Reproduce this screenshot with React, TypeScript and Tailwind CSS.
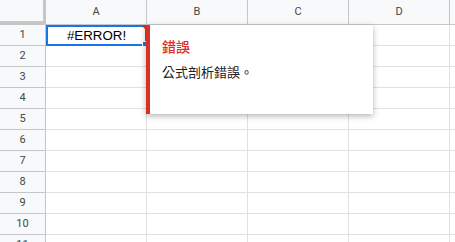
import React from "react";

const cols = ["A", "B", "C", "D", ""];
const rows = [1, 2, 3, 4, 5, 6, 7, 8, 9, 10, 11];

export default function App() {
  return (
    <div className="relative w-[455px] h-[242px] overflow-hidden bg-white" style={{ fontFamily: "Roboto, 'Liberation Sans', sans-serif" }}>
      {/* header row */}
      <div className="flex h-[25px]">
        <div className="w-[46px] shrink-0 h-[25px] bg-[#f8f9fa] border-r-[3px] border-b-[4px] border-[#c4c7c5]" />
        {cols.map((c, i) => (
          <div
            key={i}
            className="w-[101px] shrink-0 h-[25px] bg-[#f8f9fa] border-r border-b border-r-[#c4c7c5] border-b-[#c4c7c5] flex items-center justify-center text-[11px] text-[#444746]"
          >
            {c}
          </div>
        ))}
      </div>
      {rows.map((r) => (
        <div key={r} className="flex h-[21px]">
          <div className="w-[46px] shrink-0 h-[21px] bg-[#f8f9fa] border-r border-b border-r-[#c4c7c5] border-b-[#c4c7c5] flex items-center justify-center text-[11px] text-[#444746]">
            {r}
          </div>
          {cols.map((c, i) => (
            <div key={i} className="w-[101px] shrink-0 h-[21px] border-r border-b border-[#e1e1e1]" />
          ))}
        </div>
      ))}

      {/* selected cell A1 */}
      <div className="absolute left-[46px] top-[25px] w-[101px] h-[21px] border-2 border-[#1a73e8] flex items-center justify-center text-[13.33px] text-black" style={{ fontFamily: "'Liberation Sans', Arial, sans-serif" }}>
        #ERROR!
      </div>
      {/* error triangle */}
      <div className="absolute left-[141px] top-[25px] w-0 h-0 border-t-[5px] border-l-[5px] border-t-[#d93025] border-l-transparent" />
      {/* fill handle */}
      <div className="absolute left-[142px] top-[41px] w-[6px] h-[6px] bg-[#1a73e8] border border-white" />

      {/* tooltip */}
      <div
        className="absolute left-[146px] top-[25px] w-[227px] h-[89px] bg-white border-l-4 border-[#d93025] shadow-[0_2px_6px_rgba(0,0,0,0.3)] pl-[12px] pt-[12px]"
        style={{ fontFamily: "Roboto, 'Noto Sans CJK TC', sans-serif" }}
      >
        <div className="text-[14px] leading-[20px] font-medium text-[#d93025]">錯誤</div>
        <div className="mt-[7px] text-[13px] leading-[18px] text-[#202124]">公式剖析錯誤。</div>
      </div>
    </div>
  );
}
